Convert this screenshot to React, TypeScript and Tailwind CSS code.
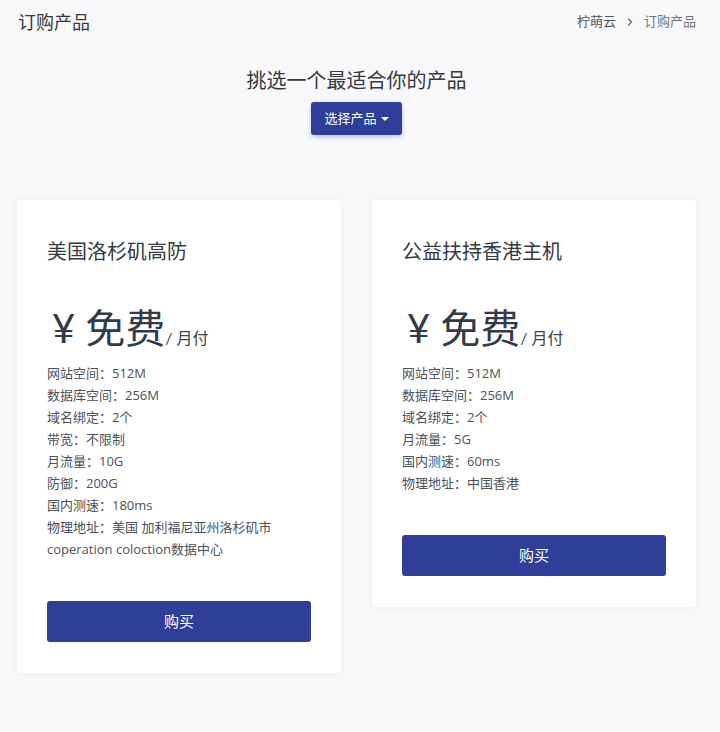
import React from "react";
import { ChevronRight } from "lucide-react";

const font = { fontFamily: "Lato, 'Noto Sans CJK SC', sans-serif" };
const listFont = { fontFamily: "'Open Sans', 'Noto Sans CJK SC', sans-serif" };

function Card({ title, items, }: { title: string; items: string[] }) {
  return (
    <div className="bg-white rounded-[4px] shadow-[0_0_6px_rgba(0,0,0,0.05)] px-[30px] pt-[36px] pb-[31px]">
      <div className="text-[20px] leading-[30px] text-[#343a40]">{title}</div>
      <div className="mt-[38px] flex items-end text-[#313a46]">
        <span className="text-[40px] leading-[48px] ml-[5px]">¥</span>
        <span className="text-[40px] leading-[48px] ml-[10px]">免费</span>
        <span className="text-[16px] leading-[24px] mb-[2px] text-[#3e4552]">/ 月付</span>
      </div>
      <div className="mt-[10px] text-[13px] leading-[22px] text-[#4b5159]" style={listFont}>
        {items.map((t, i) => (
          <div key={i}>{t}</div>
        ))}
      </div>
      <button className="mt-[41px] w-full h-[41px] rounded-[3px] bg-[#2f3e98] text-white text-[15px]">购买</button>
    </div>
  );
}

export default function App() {
  return (
    <div className="min-h-[732px] bg-[#f8f8fa]" style={font}>
      <div className="flex items-center justify-between pl-[18px] pr-[24px] h-[44px]">
        <div className="text-[18px] text-[#343a40]">订购产品</div>
        <div className="flex items-center text-[13px] text-[#6c757d]">
          <span className="text-[#4b5159]">柠萌云</span>
          <ChevronRight size={12} strokeWidth={3} className="mx-[8px] text-[#6c757d]" />
          <span>订购产品</span>
        </div>
      </div>
      <div className="flex flex-col items-center mt-[22px] pl-[17px] pr-[24px]">
        <div className="text-[20px] leading-[28px] text-[#343a40]">挑选一个最适合你的产品</div>
        <button className="mt-[8px] h-[33px] px-[13px] rounded-[3px] bg-[#2f3e98] text-white text-[13px] flex items-center shadow-[0_2px_4px_rgba(47,62,152,0.3)]">
          选择产品
          <span className="ml-[4px] w-0 h-0 border-l-[4px] border-r-[4px] border-t-[4px] border-l-transparent border-r-transparent border-t-white"></span>
        </button>
      </div>
      <div className="grid grid-cols-2 gap-[31px] items-start pl-[17px] pr-[24px] mt-[65px]">
        <Card
          title="美国洛杉矶高防"
          items={[
            "网站空间：512M",
            "数据库空间：256M",
            "域名绑定：2个",
            "带宽：不限制",
            "月流量：10G",
            "防御：200G",
            "国内测速：180ms",
            "物理地址：美国 加利福尼亚州洛杉矶市coperation coloction数据中心",
          ]}
        />
        <Card
          title="公益扶持香港主机"
          items={[
            "网站空间：512M",
            "数据库空间：256M",
            "域名绑定：2个",
            "月流量：5G",
            "国内测速：60ms",
            "物理地址：中国香港",
          ]}
        />
      </div>
    </div>
  );
}
